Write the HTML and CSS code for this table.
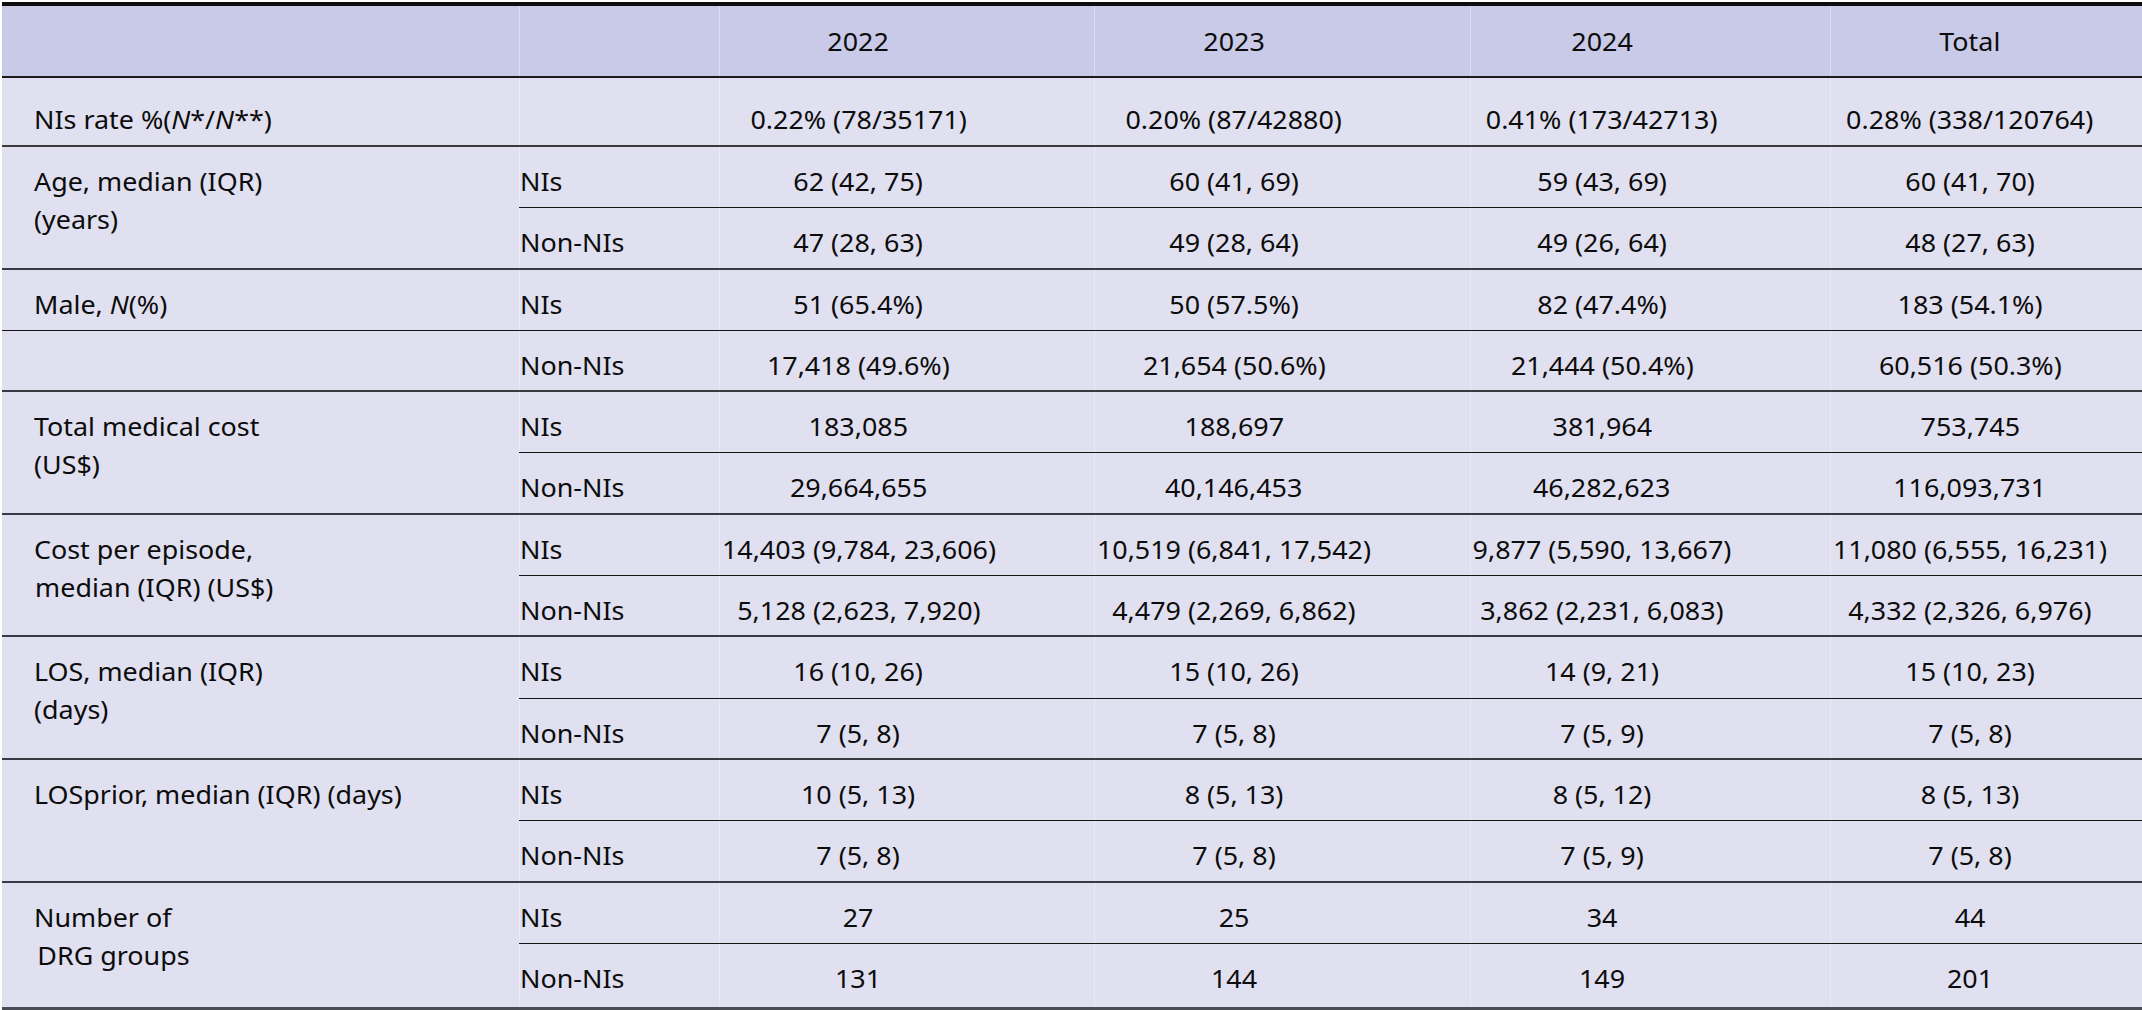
FILE: index.html
```html
<!DOCTYPE html>
<html lang="en">
<head>
<meta charset="utf-8">
<title>NIs table</title>
<link rel="stylesheet" href="styles.css">
</head>
<body>
<div class="tbl">
  <div class="c h lab"></div>
  <div class="c h kind sep"></div>
  <div class="c h v sep"><span class="t">2022</span></div>
  <div class="c h v sep"><span class="t">2023</span></div>
  <div class="c h v sep"><span class="t">2024</span></div>
  <div class="c h v v6 sep"><span class="t">Total</span></div>

  <div class="c r1 lab"><span class="t">NIs rate %(<i>N</i>*/<i>N</i>**)</span></div>
  <div class="c r1 kind sep"></div>
  <div class="c r1 v sep"><span class="t">0.22% (78/35171)</span></div>
  <div class="c r1 v sep"><span class="t">0.20% (87/42880)</span></div>
  <div class="c r1 v sep"><span class="t">0.41% (173/42713)</span></div>
  <div class="c r1 v v6 sep"><span class="t">0.28% (338/120764)</span></div>

  <div class="c lab span2 grp"><span class="t">Age, median (IQR)<br>(years)</span></div>
  <div class="c kind sub sep"><span class="t">NIs</span></div>
  <div class="c v sub sep"><span class="t">62 (42, 75)</span></div>
  <div class="c v sub sep"><span class="t">60 (41, 69)</span></div>
  <div class="c v sub sep"><span class="t">59 (43, 69)</span></div>
  <div class="c v v6 sub sep"><span class="t">60 (41, 70)</span></div>
  <div class="c kind grp sep"><span class="t">Non-NIs</span></div>
  <div class="c v grp sep"><span class="t">47 (28, 63)</span></div>
  <div class="c v grp sep"><span class="t">49 (28, 64)</span></div>
  <div class="c v grp sep"><span class="t">49 (26, 64)</span></div>
  <div class="c v v6 grp sep"><span class="t">48 (27, 63)</span></div>

  <div class="c lab sub"><span class="t">Male, <i>N</i>(%)</span></div>
  <div class="c kind sub sep"><span class="t">NIs</span></div>
  <div class="c v sub sep"><span class="t">51 (65.4%)</span></div>
  <div class="c v sub sep"><span class="t">50 (57.5%)</span></div>
  <div class="c v sub sep"><span class="t">82 (47.4%)</span></div>
  <div class="c v v6 sub sep"><span class="t">183 (54.1%)</span></div>
  <div class="c lab grp"></div>
  <div class="c kind grp sep"><span class="t">Non-NIs</span></div>
  <div class="c v grp sep"><span class="t">17,418 (49.6%)</span></div>
  <div class="c v grp sep"><span class="t">21,654 (50.6%)</span></div>
  <div class="c v grp sep"><span class="t">21,444 (50.4%)</span></div>
  <div class="c v v6 grp sep"><span class="t">60,516 (50.3%)</span></div>

  <div class="c lab span2 grp"><span class="t">Total medical cost<br>(US$)</span></div>
  <div class="c kind sub sep"><span class="t">NIs</span></div>
  <div class="c v sub sep"><span class="t">183,085</span></div>
  <div class="c v sub sep"><span class="t">188,697</span></div>
  <div class="c v sub sep"><span class="t">381,964</span></div>
  <div class="c v v6 sub sep"><span class="t">753,745</span></div>
  <div class="c kind grp sep"><span class="t">Non-NIs</span></div>
  <div class="c v grp sep"><span class="t">29,664,655</span></div>
  <div class="c v grp sep"><span class="t">40,146,453</span></div>
  <div class="c v grp sep"><span class="t">46,282,623</span></div>
  <div class="c v v6 grp sep"><span class="t">116,093,731</span></div>

  <div class="c lab span2 grp"><span class="t">Cost per episode,<br><span class="ind">median (IQR) (US$)</span></span></div>
  <div class="c kind sub sep"><span class="t">NIs</span></div>
  <div class="c v sub sep"><span class="t">14,403 (9,784, 23,606)</span></div>
  <div class="c v sub sep"><span class="t">10,519 (6,841, 17,542)</span></div>
  <div class="c v sub sep"><span class="t">9,877 (5,590, 13,667)</span></div>
  <div class="c v v6 sub sep"><span class="t">11,080 (6,555, 16,231)</span></div>
  <div class="c kind grp sep"><span class="t">Non-NIs</span></div>
  <div class="c v grp sep"><span class="t">5,128 (2,623, 7,920)</span></div>
  <div class="c v grp sep"><span class="t">4,479 (2,269, 6,862)</span></div>
  <div class="c v grp sep"><span class="t">3,862 (2,231, 6,083)</span></div>
  <div class="c v v6 grp sep"><span class="t">4,332 (2,326, 6,976)</span></div>

  <div class="c lab span2 grp"><span class="t">LOS, median (IQR)<br>(days)</span></div>
  <div class="c kind sub sep"><span class="t">NIs</span></div>
  <div class="c v sub sep"><span class="t">16 (10, 26)</span></div>
  <div class="c v sub sep"><span class="t">15 (10, 26)</span></div>
  <div class="c v sub sep"><span class="t">14 (9, 21)</span></div>
  <div class="c v v6 sub sep"><span class="t">15 (10, 23)</span></div>
  <div class="c kind grp sep"><span class="t">Non-NIs</span></div>
  <div class="c v grp sep"><span class="t">7 (5, 8)</span></div>
  <div class="c v grp sep"><span class="t">7 (5, 8)</span></div>
  <div class="c v grp sep"><span class="t">7 (5, 9)</span></div>
  <div class="c v v6 grp sep"><span class="t">7 (5, 8)</span></div>

  <div class="c lab span2 grp"><span class="t">LOSprior, median (IQR) (days)</span></div>
  <div class="c kind sub sep"><span class="t">NIs</span></div>
  <div class="c v sub sep"><span class="t">10 (5, 13)</span></div>
  <div class="c v sub sep"><span class="t">8 (5, 13)</span></div>
  <div class="c v sub sep"><span class="t">8 (5, 12)</span></div>
  <div class="c v v6 sub sep"><span class="t">8 (5, 13)</span></div>
  <div class="c kind grp sep"><span class="t">Non-NIs</span></div>
  <div class="c v grp sep"><span class="t">7 (5, 8)</span></div>
  <div class="c v grp sep"><span class="t">7 (5, 8)</span></div>
  <div class="c v grp sep"><span class="t">7 (5, 9)</span></div>
  <div class="c v v6 grp sep"><span class="t">7 (5, 8)</span></div>

  <div class="c lab span2 last"><span class="t">Number of<br><span class="ind2">DRG groups</span></span></div>
  <div class="c kind sub sep"><span class="t">NIs</span></div>
  <div class="c v sub sep"><span class="t">27</span></div>
  <div class="c v sub sep"><span class="t">25</span></div>
  <div class="c v sub sep"><span class="t">34</span></div>
  <div class="c v v6 sub sep"><span class="t">44</span></div>
  <div class="c kind last sep"><span class="t">Non-NIs</span></div>
  <div class="c v last sep"><span class="t">131</span></div>
  <div class="c v last sep"><span class="t">144</span></div>
  <div class="c v last sep"><span class="t">149</span></div>
  <div class="c v v6 last sep"><span class="t">201</span></div>
</div>
</body>
</html>
```

FILE: styles.css
```css
html, body {
  margin: 0;
  padding: 0;
  background: #ffffff;
}

body {
  overflow: hidden;
  font-family: "Noto Sans", "Open Sans", "DejaVu Sans", sans-serif;
  color: #0c0c0c;
}

.tbl {
  display: grid;
  grid-template-columns: 517px 200px 375px 376px 360px 312px;
  grid-template-rows: 72px 69px repeat(13, 61.3px) 66px;
  margin: 2px 0 0 2px;
  border-top: 4px solid #0e0e0e;
  font-size: 24.5px;
  line-height: 38px;
}

.c {
  box-sizing: border-box;
  background: #e0e0f0;
  white-space: nowrap;
  padding-top: 16px;
}

.h {
  background: #c9cae7;
  padding-top: 17px;
  border-bottom: 2px solid #1b1b1b;
}

.r1 {
  padding-top: 23px;
  border-bottom: 2px solid #3a3a3a;
}

.sub {
  border-bottom: 1px solid #151515;
}

.grp {
  border-bottom: 2px solid #3a3a44;
}

.last {
  border-bottom: 3px solid #4a4a55;
}

.span2 {
  grid-row: span 2;
}

.lab {
  padding-left: 32px;
}

.kind {
  padding-left: 1px;
}

.v {
  text-align: center;
  padding-right: 96px;
}

.v6 {
  padding-right: 32px;
}

.sep {
  box-shadow: inset 1px 0 0 rgba(255, 255, 255, 0.35);
}

.t {
  display: inline-block;
  transform: scaleX(1.097);
  transform-origin: 0 50%;
}

.v .t {
  transform-origin: 50% 50%;
}

.ind {
  padding-left: 1px;
}

.ind2 {
  padding-left: 3px;
}
```
